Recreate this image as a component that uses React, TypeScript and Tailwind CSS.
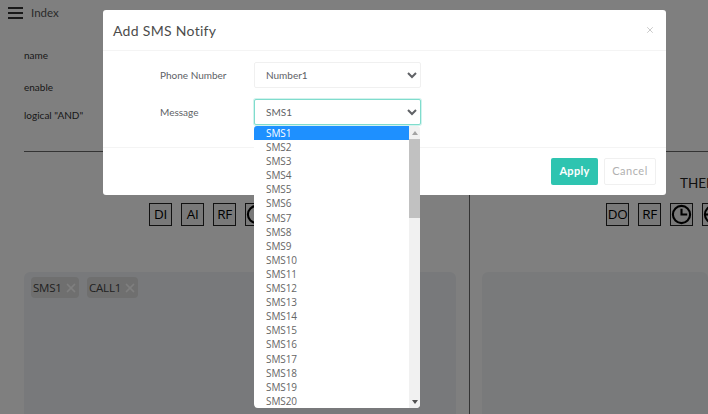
import { X } from "lucide-react";

const smsOptions = Array.from({ length: 20 }, (_, i) => `SMS${i + 1}`);

function ClockIcon({ partial }: { partial?: boolean }) {
  return (
    <svg viewBox="0 0 22 22" className="h-[21px] w-[21px]" fill="none" stroke="#000" strokeWidth={2.2}>
      <circle cx="11" cy="11" r="9" />
      <path d={partial ? "M2 11h18" : "M11 5v6h6"} />
    </svg>
  );
}

function IconBox({ children }: { children: React.ReactNode }) {
  return (
    <div className="flex h-[23px] w-[23px] shrink-0 items-center justify-center border border-[#222] bg-[#f2f2f2] font-['Open_Sans',sans-serif] text-[13.5px] leading-none tracking-[-0.3px] text-black">
      {children}
    </div>
  );
}

function Chip({ label, width }: { label: string; width: string }) {
  return (
    <div className={`flex h-[21px] shrink-0 items-center justify-between rounded-sm bg-[#dedede] pl-[2px] pr-[1px] font-['Open_Sans',sans-serif] text-[11.5px] tracking-[-0.2px] text-[#444] ${width}`}>
      <span>{label}</span>
      <X className="h-[14px] w-[14px] shrink-0 text-white" strokeWidth={3} />
    </div>
  );
}

export default function App() {
  return (
    <div className="relative h-[414px] w-[708px] overflow-hidden bg-white font-['Lato',sans-serif] text-[#333]">
      {/* Page under the dialog */}
      <header className="flex h-[25px] items-center gap-[8px] pl-[8px]">
        <div className="flex w-[15px] flex-col gap-[3px]">
          <span className="h-[2px] bg-[#333]" />
          <span className="h-[2px] bg-[#333]" />
          <span className="h-[2px] bg-[#333]" />
        </div>
        <span className="text-[11.5px] text-[#555]">Index</span>
      </header>

      <section className="ml-[24px] flex h-[127px] flex-col border-b border-[#666] pt-[23px] text-[10px] text-[#333]">
        <span className="leading-[14px]">name</span>
        <span className="mt-[18px] leading-[14px]">enable</span>
        <span className="mt-[14px] leading-[14px]">logical "AND"</span>
      </section>

      <main className="flex h-[262px]">
        <div className="flex w-[470px] shrink-0 flex-col border-r border-[#666] pl-[24px]">
          <div className="flex gap-[9px] pl-[125px] pt-[51px]">
            <IconBox>DI</IconBox>
            <IconBox>AI</IconBox>
            <IconBox>RF</IconBox>
            <IconBox><ClockIcon /></IconBox>
          </div>
          <div className="mr-[13px] mt-[46px] flex flex-1 gap-[8px] rounded-t-md bg-[#f0f3f6] pl-[7px] pt-[5px]">
            <Chip label="SMS1" width="w-[48px]" />
            <Chip label="CALL1" width="w-[51px]" />
          </div>
        </div>
        <div className="flex w-[238px] shrink-0 flex-col">
          <div className="relative flex gap-[9px] pl-[136px] pt-[51px]">
            <span className="absolute left-[210px] top-[25px] text-[13.5px] leading-none text-[#222]">THEN</span>
            <IconBox>DO</IconBox>
            <IconBox>RF</IconBox>
            <IconBox><ClockIcon /></IconBox>
            <IconBox><ClockIcon partial /></IconBox>
          </div>
          <div className="ml-[12px] mt-[46px] flex-1 rounded-t-md bg-[#f3f5f6]" />
        </div>
      </main>

      {/* Backdrop */}
      <div className="absolute inset-0 bg-black/50" />

      {/* Dialog */}
      <div className="absolute left-[103px] top-[10px] flex h-[185px] w-[563px] flex-col rounded-[3px] bg-white text-[#606266]">
        <div className="flex h-[41px] shrink-0 items-center justify-between border-b border-[#f4f4f4] pl-[10px] pr-[11px]">
          <h2 className="text-[14px] tracking-[0.3px] text-[#4c4c4c]">Add SMS Notify</h2>
          <X className="h-[10px] w-[10px] text-[#c0c0c0]" strokeWidth={2} />
        </div>

        <div className="flex h-[97px] shrink-0 flex-col gap-[11px] border-b border-[#f4f4f4] pl-[57px] pt-[11px]">
          <label className="flex items-center text-[10px]">
            <span className="w-[94px]">Phone Number</span>
            <select defaultValue="Number1" className="h-[26px] w-[167px] rounded-[2px] border border-[#f0f0f0] bg-white pl-[7px] text-[10px] text-[#606266]">
              <option>Number1</option>
            </select>
          </label>
          <label className="flex items-center text-[10px]">
            <span className="w-[94px]">Message</span>
            <select defaultValue="SMS1" className="h-[26px] w-[167px] rounded-[2px] border border-[#7fdccd] bg-white pl-[7px] text-[10px] text-[#606266] shadow-[0_0_0_1px_#d2f3ed]">
              {smsOptions.map((o) => (
                <option key={o}>{o}</option>
              ))}
            </select>
          </label>
        </div>

        <div className="flex flex-1 items-center justify-end gap-[6px] pr-[10px]">
          <button className="h-[27px] w-[47px] rounded-[2px] bg-[#2ec4b0] text-[11px] font-bold tracking-[0.3px] text-white">Apply</button>
          <button className="h-[27px] w-[52px] rounded-[2px] border border-[#f0f0f0] bg-white text-[11px] tracking-[0.5px] text-[#b0b0b0]">Cancel</button>
        </div>
      </div>

      {/* Open select list */}
      <div className="absolute left-[254px] top-[126px] flex h-[282px] w-[166px] overflow-hidden rounded-b-[4px] rounded-t-[3px] bg-white font-['Open_Sans',sans-serif]">
        <ul className="w-[155px] text-[10px] leading-[14.1px] tracking-[-0.1px] text-[#666]">
          {smsOptions.map((o, i) => (
            <li key={o} className={i === 0 ? "bg-[#1e90ff] pl-[12px] text-white" : "pl-[12px]"}>
              {o}
            </li>
          ))}
        </ul>
        <div className="flex w-[11px] flex-col items-center bg-[#f1f1f1]">
          <div className="flex h-[13px] w-full items-center justify-center">
            <span className="h-0 w-0 border-x-[3px] border-b-[4px] border-x-transparent border-b-[#a3a3a3]" />
          </div>
          <div className="h-[79px] w-full bg-[#c1c1c1]" />
          <div className="flex-1" />
          <div className="flex h-[13px] w-full items-center justify-center">
            <span className="h-0 w-0 border-x-[3px] border-t-[4px] border-x-transparent border-t-[#505050]" />
          </div>
        </div>
      </div>
    </div>
  );
}
